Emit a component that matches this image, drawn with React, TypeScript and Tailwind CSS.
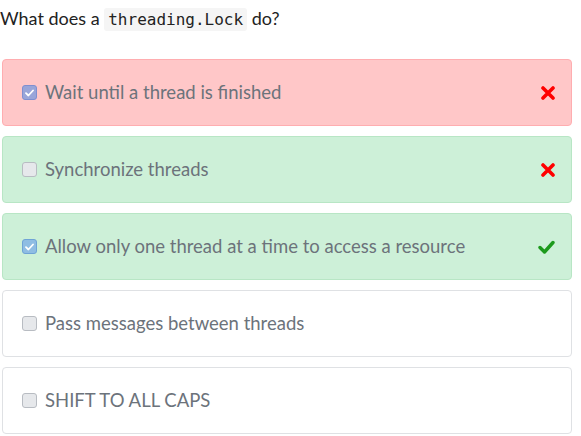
import React from "react";

interface Option {
  text: string;
  checked: boolean;
  state: "wrong" | "right" | "none";
  mark?: "x" | "check";
}

const options: Option[] = [
  { text: "Wait until a thread is finished", checked: true, state: "wrong", mark: "x" },
  { text: "Synchronize threads", checked: false, state: "right", mark: "x" },
  { text: "Allow only one thread at a time to access a resource", checked: true, state: "right", mark: "check" },
  { text: "Pass messages between threads", checked: false, state: "none" },
  { text: "SHIFT TO ALL CAPS", checked: false, state: "none" },
];

const XMark = () => (
  <svg width="14" height="14" viewBox="0 0 14 14">
    <path d="M2 2 L12 12 M12 2 L2 12" stroke="#ff0000" strokeWidth="3.6" strokeLinecap="round" />
  </svg>
);

const CheckMark = () => (
  <svg width="17" height="14" viewBox="0 0 17 14">
    <path d="M2 7.5 L6.5 12 L15 2.5" stroke="#1c9a1c" strokeWidth="3.4" fill="none" strokeLinecap="round" strokeLinejoin="round" />
  </svg>
);

const Box: React.FC<{ checked: boolean; tint: string }> = ({ checked, tint }) =>
  checked ? (
    <span className={`w-[15px] h-[15px] rounded-[3px] border flex items-center justify-center ${tint}`}>
      <svg width="9" height="8" viewBox="0 0 9 8">
        <path d="M1 4.2 L3.4 6.5 L8 1.5" stroke="#fff" strokeWidth="1.8" fill="none" strokeLinecap="round" strokeLinejoin="round" />
      </svg>
    </span>
  ) : (
    <span className="w-[15px] h-[15px] rounded-[3px] border border-[#b8bcc2] bg-[#e6e8eb]" />
  );

export default function App() {
  return (
    <div className="w-[581px] h-[436px] bg-white overflow-hidden font-['Lato',sans-serif]">
      <p className="text-[18px] text-[#222] pt-[6px] leading-[24px]">
        What does a{" "}
        <code className="font-['DejaVu_Sans_Mono',monospace] text-[16px] bg-[#f5f5f5] px-[4px] py-[2px] rounded-[3px] text-[#222]">
          threading.Lock
        </code>{" "}
        do?
      </p>
      <div className="flex flex-col gap-[10px] pl-[2px] pr-[9px] mt-[27px]">
        {options.map((o, i) => {
          const card =
            o.state === "wrong"
              ? "bg-[#ffc7c8] border-[#ffadb0]"
              : o.state === "right"
              ? "bg-[#cdf0d8] border-[#b8e6c5]"
              : "bg-white border-[#dfe1e4]";
          const tint =
            o.state === "wrong" ? "bg-[#99a5d9] border-[#7f8fd0]" : "bg-[#8fbde3] border-[#6fa3d6]";
          return (
            <div key={i} className={`h-[67px] border rounded-[4px] flex items-center pl-[19px] pr-[16px] ${card}`}>
              <Box checked={o.checked} tint={tint} />
              <span className="ml-[8px] text-[18.5px] text-[#6c737b] flex-1">{o.text}</span>
              {o.mark === "x" && <XMark />}
              {o.mark === "check" && <CheckMark />}
            </div>
          );
        })}
      </div>
    </div>
  );
}
